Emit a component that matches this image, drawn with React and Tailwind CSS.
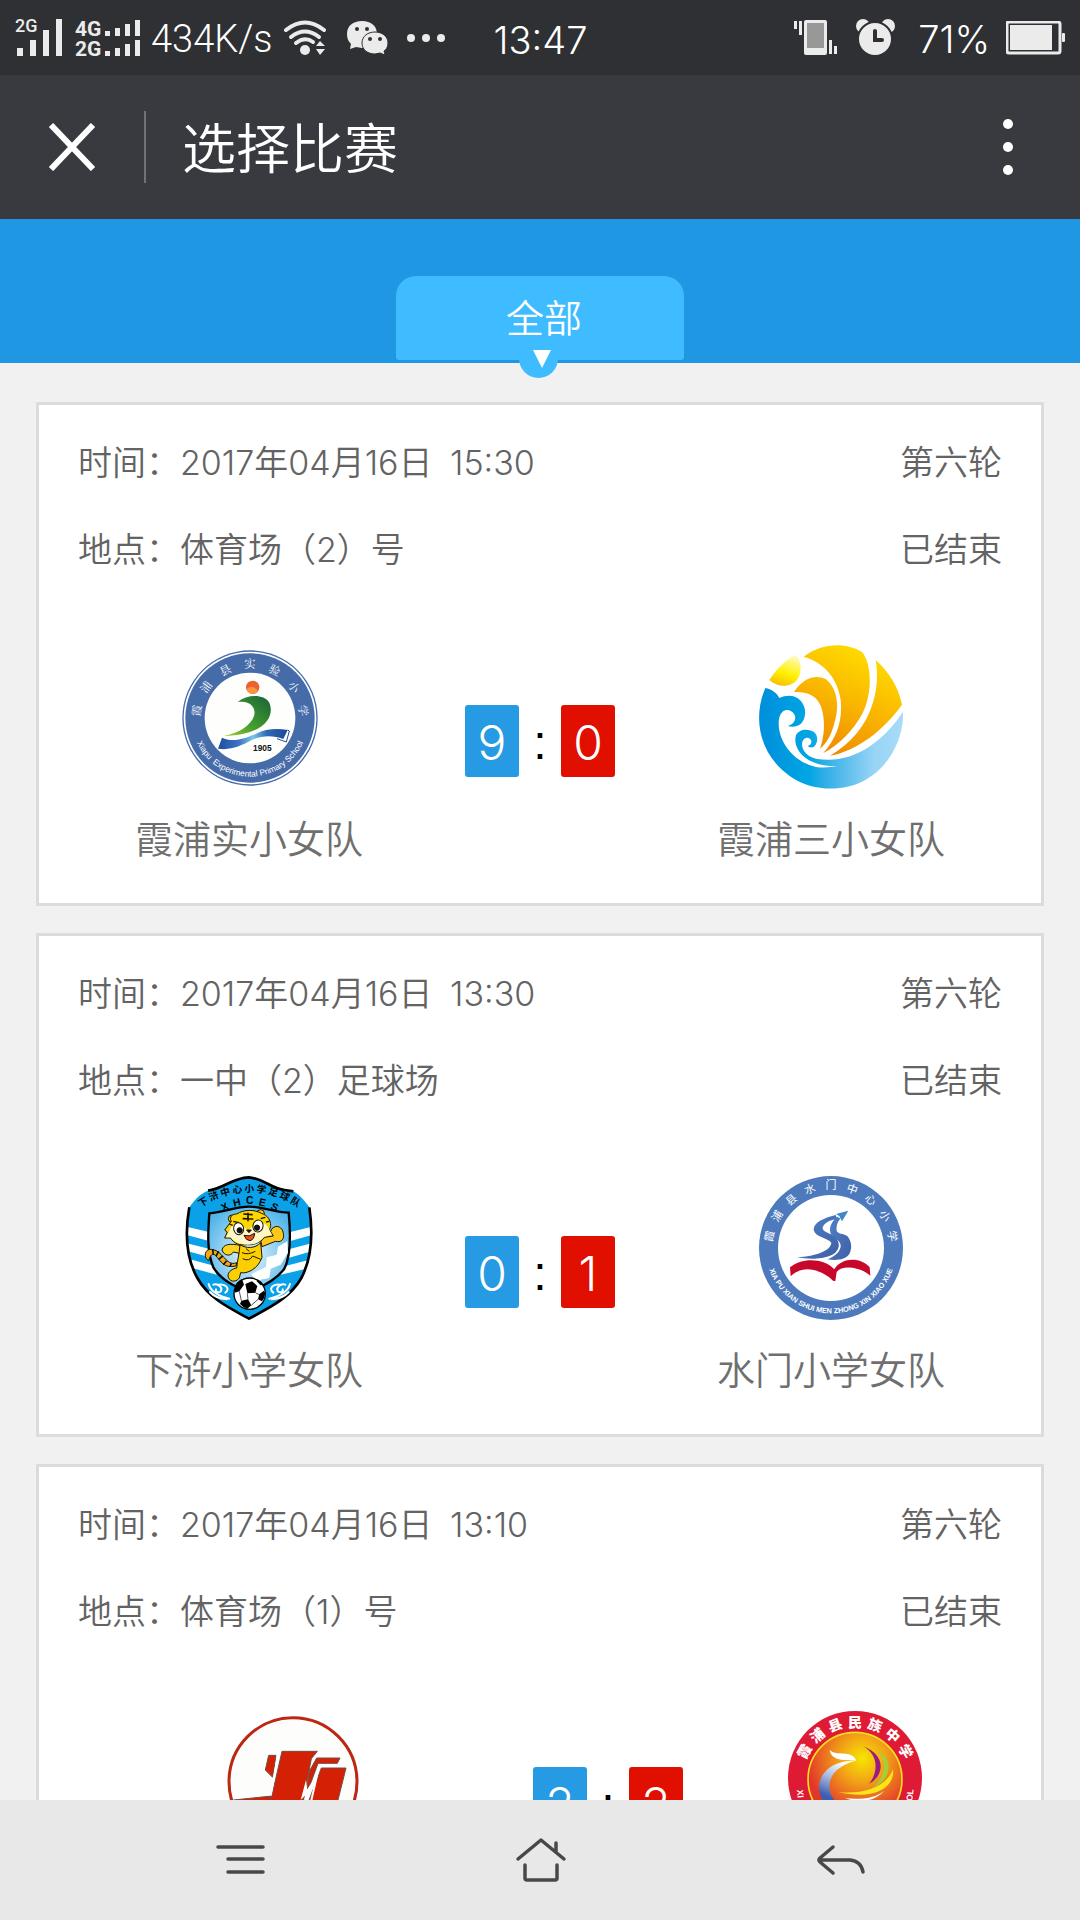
import React from "react";

function RingText({ text, cx, cy, r, from, to, size, weight = 400, fill = "#fff", family }) {
  const chars = [...text];
  const step = (to - from) / (chars.length - 1);
  return (
    <g fill={fill} fontSize={size} fontWeight={weight} textAnchor="middle" fontFamily={family || "'Noto Sans CJK SC', sans-serif"}>
      {chars.map((c, i) => (
        <text key={i} x={cx} y={cy - r + size * 0.36} transform={`rotate(${from + step * i} ${cx} ${cy})`}>
          {c}
        </text>
      ))}
    </g>
  );
}

function XiapuExperimentalLogo() {
  return (
    <svg viewBox="51 75 432 432" className="size-36" role="img" aria-label="霞浦县实验小学">
      <defs>
        <linearGradient id="xe-green" x1="0" y1="1" x2="1" y2="0">
          <stop offset="0" stopColor="#a5cf2c" />
          <stop offset="0.4" stopColor="#45a02f" />
          <stop offset="1" stopColor="#176137" />
        </linearGradient>
        <linearGradient id="xe-book" x1="0" y1="0" x2="1" y2="0">
          <stop offset="0" stopColor="#1c4f9e" />
          <stop offset="0.3" stopColor="#3c74c4" />
          <stop offset="0.5" stopColor="#7ec5ea" />
          <stop offset="0.7" stopColor="#2f6ab6" />
          <stop offset="1" stopColor="#1d4896" />
        </linearGradient>
        <path id="xe-arc" d="M94 294A176 176 0 0 0 446 294" />
      </defs>
      <circle cx="270" cy="294" r="203" fill="#456ba9" />
      <circle cx="270" cy="294" r="199" fill="#fff" />
      <circle cx="270" cy="294" r="194" fill="#456ba9" />
      <circle cx="270" cy="294" r="136" fill="#fefefc" />
      <RingText text="霞浦县实验小学" cx={270} cy={294} r={161} from={-82} to={82} size={34} family="'Noto Serif CJK SC', 'Noto Sans CJK SC', serif" />
      <text fill="#fff" fontSize="25" fontFamily="'Liberation Sans', sans-serif" textAnchor="middle">
        <textPath href="#xe-arc" startOffset="50%">Xiapu&#160; Experimental Primary School</textPath>
      </text>
      <circle cx="278" cy="202" r="20" fill="#ec6231" />
      <path d="M260 208q8-10 18-7 10 4 16 12-8 10-18 9-12-3-16-14z" fill="#f9983e" />
      <path d="M233 246C262 222 312 222 327 247C346 286 318 345 192 348C240 338 272 316 282 288C290 262 268 240 233 246Z" fill="url(#xe-green)" />
      <path d="M186 353C220 370 262 352 288 341C318 326 350 324 383 330L370 357C340 346 306 345 274 361C242 378 212 392 174 386Z" fill="url(#xe-book)" />
      <path d="M383 330l5 3-9 33-28-10" fill="none" stroke="#1d4896" strokeWidth="3" />
      <text x="307" y="392" fontSize="25" fontWeight="700" textAnchor="middle" fill="#111" fontFamily="'Liberation Sans', sans-serif">1905</text>
    </svg>
  );
}

function SunWaveLogo() {
  return (
    <svg viewBox="57 75 432 432" className="size-36" role="img" aria-label="霞浦三小">
      <defs>
        <linearGradient id="sw-gold" gradientUnits="userSpaceOnUse" x1="270" y1="400" x2="400" y2="110">
          <stop offset="0" stopColor="#f08a00" />
          <stop offset="0.5" stopColor="#f9b500" />
          <stop offset="1" stopColor="#ffd900" />
        </linearGradient>
        <linearGradient id="sw-sea" gradientUnits="userSpaceOnUse" x1="57" y1="0" x2="489" y2="0">
          <stop offset="0" stopColor="#008edb" />
          <stop offset="0.35" stopColor="#00a6e4" />
          <stop offset="0.45" stopColor="#2eade6" />
          <stop offset="0.8" stopColor="#98d4f5" />
          <stop offset="1" stopColor="#a6dcf8" />
        </linearGradient>
        <linearGradient id="sw-sun" x1="0.7" y1="0" x2="0.35" y2="1">
          <stop offset="0" stopColor="#fffbc0" />
          <stop offset="0.6" stopColor="#fff100" />
          <stop offset="1" stopColor="#fabe00" />
        </linearGradient>
      </defs>
      <path d="M88 180C108 148 136 120 166 104C182 120 188 148 175 174C156 204 114 204 88 180Z" fill="url(#sw-sun)" />
      <path d="M191 110C246 68 318 66 366 96C396 132 396 216 372 270C350 320 300 374 249 400C292 352 308 300 302 240C294 180 256 128 191 110Z" fill="url(#sw-gold)" />
      <path d="M407 120C448 156 476 204 486 254C430 330 354 392 270 407C334 370 380 316 400 244C412 204 414 160 407 120Z" fill="url(#sw-gold)" />
      <path d="M162 216C186 178 224 160 258 178C294 208 298 262 284 306C274 346 260 370 240 386C254 348 256 300 244 262C232 228 204 214 162 216Z" fill="url(#sw-gold)" />
      <path d="M76 204C94 208 110 218 118 234C140 224 166 224 182 242C202 264 198 296 182 312C170 321 156 322 143 318C158 314 168 302 165 288C160 272 140 264 127 276C110 292 114 336 130 366C150 404 186 432 228 441C250 444 272 442 292 439C262 440 232 434 206 420C176 402 160 372 168 346C176 328 202 324 222 336C236 348 234 370 222 380C214 384 208 382 203 378C214 376 218 364 210 356C200 350 190 356 187 366C182 390 202 410 228 416C330 434 424 374 489 275C492 350 452 440 372 482C308 516 216 514 152 470C64 410 34 302 76 204Z" fill="url(#sw-sea)" />
    </svg>
  );
}

function TigerShieldLogo() {
  return (
    <svg viewBox="51 78 432 432" className="size-36" role="img" aria-label="下浒中心小学足球队">
      <defs>
        <radialGradient id="ts-sky" cx="0.5" cy="0.55" r="0.6">
          <stop offset="0" stopColor="#e6f4fc" />
          <stop offset="1" stopColor="#52b5ea" />
        </radialGradient>
        <clipPath id="ts-clip">
          <path d="M266 82C308 84 334 116 374 120L400 124C420 134 438 158 448 172C458 240 458 320 424 384C390 444 330 472 267 506C204 472 146 444 112 384C76 320 76 240 88 172C100 154 120 130 144 122C190 116 216 84 266 82Z" />
        </clipPath>
      </defs>
      <g clipPath="url(#ts-clip)">
        <rect x="60" y="78" width="410" height="432" fill="#0aa1e8" />
        <path d="M80 230l70 17v27L80 255zM80 280l70 17v25L84 304zM90 328l66 18 14 28L96 354zM455 230l-64 16v27l66-18zM455 280l-66 17-4 27 70-20zM446 330l-70 18-14 26 78-18z" fill="#fff" />
      </g>
      <path d="M144 122C190 116 216 84 266 82C308 84 334 116 374 120L400 124M448 172C458 240 458 320 424 384C390 444 330 472 267 506C204 472 146 444 112 384C76 320 76 240 88 172" fill="none" stroke="#000" strokeWidth="8" />
      <path d="M148 190C194 186 228 170 268 170C308 170 342 186 386 188C392 250 394 318 372 358C344 394 304 408 267 428C226 410 184 392 160 352C140 306 144 246 148 190Z" fill="url(#ts-sky)" stroke="#000" strokeWidth="7" />
      <path d="M382 274l-28 16-4 24-30 8-2 28-44 22 12 20 42-8 4-28 30-12 22-36z" fill="#fff" />
      <RingText text="下浒中心小学足球队" cx={268} cy={378} r={262} from={-32} to={32} size={29} weight={700} fill="#000" />
      <RingText text="XHCES" cx={269} cy={317} r={165} from={-27} to={27} size={31} weight={700} fill="#000" family="'Liberation Sans', sans-serif" />
      <g stroke="#1a1200" strokeWidth="3" strokeLinejoin="round">
        <path d="M230 338C196 352 190 296 148 298C130 304 134 326 146 332C150 316 158 308 166 316C184 334 190 356 228 348Z" fill="#f4a91c" />
        <path d="M158 298l2 16M176 304l-8 14M188 318l-12 10M200 332l-10 12M214 340l-4 10" fill="none" strokeWidth="5" />
        <path d="M240 286C210 280 190 282 186 300C192 318 212 320 220 306L248 312Z" fill="#fcd21c" />
        <path d="M300 262C318 256 330 252 336 236C350 222 368 232 370 250C374 270 362 278 346 274L306 290Z" fill="#fcc81c" />
        <path d="M240 284C258 296 286 296 302 278L306 322C294 358 260 372 242 368L238 384C226 400 206 394 204 378C204 364 218 356 230 354C232 332 238 312 240 284Z" fill="#fcd000" />
        <circle cx="216" cy="206" r="11" fill="#fcc81c" />
        <circle cx="302" cy="190" r="11" fill="#fcc81c" />
        <path d="M214 214C206 200 218 192 230 192C252 178 284 178 304 190C324 196 332 212 332 226C332 232 330 236 328 238L340 258L314 262C300 280 276 286 262 284C240 288 220 280 212 264L194 264L202 246L194 240Z" fill="#fcd800" />
        <path d="M214 230C230 214 250 226 264 242C280 222 304 210 322 228L336 254L312 260C294 282 280 284 264 284C240 284 222 276 212 262L198 262L206 246Z" fill="#fff7c8" stroke="none" />
        <path d="M250 192l28 2M248 206l32 1M264 188v26" fill="none" strokeWidth="5" />
        <path d="M220 214l16 4M302 206l14-4M318 216l10-2M208 222l10 4" strokeWidth="4" />
        <ellipse cx="236" cy="236" rx="15" ry="18" fill="#fff" transform="rotate(-12 236 236)" />
        <ellipse cx="294" cy="228" rx="15" ry="18" fill="#fff" transform="rotate(12 294 228)" />
        <circle cx="239" cy="241" r="8" fill="#111" />
        <circle cx="291" cy="233" r="8" fill="#111" />
        <path d="M260 240h14l-7 8z" fill="#111" />
        <path d="M252 256q16 6 32-6-2 20-14 22-12 0-18-16z" fill="#e84b26" />
        <path d="M246 308q18 8 40-4M248 326q20 10 30-8l24 10M258 296l10 8" fill="none" />
      </g>
      <g fill="none" stroke="#fff" strokeWidth="6" strokeLinecap="round">
        <path d="M146 402c6 24 30 36 62 44M160 404c10-4 26 4 24 16s-20 6-16-2M176 404c20-4 36 12 20 24M150 426c12 14 30 20 50 22" />
        <path d="M390 402c-6 24-30 36-62 44M376 404c-10-4-26 4-24 16s20 6 16-2M360 404c-20-4-36 12-20 24M386 426c-12 14-30 20-50 22" />
      </g>
      <circle cx="269" cy="431" r="47" fill="#fff" stroke="#000" strokeWidth="4" />
      <path d="M256 402l20-8 16 14-6 20-24 2zM226 406q8-14 20-18l6 16-14 20-14 4zM244 452l20-4 10 18-12 10q-14-4-22-14zM298 432l14-10 4 8q-2 14-10 24l-12-6zM292 388q12 6 18 16l-8 2-12-12z" fill="#000" />
      <path d="M238 424l6 28M262 430l2 18M286 428l12 6M274 466l20-18" stroke="#000" strokeWidth="2" />
    </svg>
  );
}

function ShuimenLogo() {
  return (
    <svg viewBox="57 78 432 432" className="size-36" role="img" aria-label="霞浦县水门中心小学">
      <defs>
        <path id="sm-arc" d="M77 294A196 196 0 0 0 469 294" />
        <linearGradient id="sm-s" x1="0" y1="0" x2="1" y2="1">
          <stop offset="0" stopColor="#4f82c6" />
          <stop offset="1" stopColor="#3f5fa8" />
        </linearGradient>
      </defs>
      <circle cx="273" cy="294" r="216" fill="#4c7abc" />
      <circle cx="273" cy="294" r="159" fill="#fff" />
      <RingText text="霞浦县水门中心小学" cx={273} cy={294} r={188} from={-79} to={79} size={33} />
      <text fill="#fff" fontSize="22" fontWeight="700" fontFamily="'Liberation Sans', sans-serif" textAnchor="middle">
        <textPath href="#sm-arc" startOffset="50%">XIA PU XIAN SHUI MEN ZHONG XIN XIAO XUE</textPath>
      </text>
      <path d="M287 195C250 204 220 218 221 240C226 262 264 264 274 278C272 302 230 318 171 322C216 330 262 326 286 308C300 294 300 278 286 262C272 248 246 248 248 232C254 216 276 208 292 208Z" fill="url(#sm-s)" />
      <path d="M292 200C274 214 264 236 274 254C286 268 304 272 302 290C298 310 280 320 262 328C290 332 316 330 328 312C338 292 334 274 322 258C310 250 292 252 290 242C288 226 294 212 302 206Z" fill="url(#sm-s)" />
      <path d="M325 182L288 192L298 198L306 214Z" fill="#3f86c6" />
      <path d="M150 352C186 322 252 324 283 358C304 322 362 320 389 352L391 377C360 350 306 344 290 366L286 393H280C250 362 190 340 152 379Z" fill="#c7082a" />
    </svg>
  );
}

function RedMonogramLogo() {
  return (
    <svg viewBox="33 21 432 432" className="size-36" role="img" aria-label="队徽">
      <circle cx="249" cy="245" r="192" fill="#fdfdfb" stroke="#a8321f" strokeWidth="9" />
      <circle cx="249" cy="245" r="191" fill="none" stroke="#d02008" strokeWidth="4" />
      <g stroke="#6d5046" strokeWidth="3" strokeLinejoin="round" fill="#d42005">
        <path d="M176 166h22l-10 66-22-22z" />
        <path d="M216 154h106l-18 22-34 180H170L186 286z" />
        <path d="M320 174h70l-8 16h-58l-22 60-12 18 8-54z" />
        <path d="M334 204h74l-38 152H276z" />
        <path d="M70 300l116-12-8 24-100 6z" />
      </g>
      <path d="M206 154l-24 132M326 204l-34 150" stroke="#fff" strokeWidth="6" />
      <path d="M288 240l-16 60 14-14 4 18 14-46-12 12z" fill="#fff" />
    </svg>
  );
}

function PhoenixLogo() {
  return (
    <svg viewBox="24 21 432 432" className="size-36" role="img" aria-label="霞浦县民族中学">
      <defs>
        <radialGradient id="ph-bg" cx="0.58" cy="0.28" r="0.6">
          <stop offset="0" stopColor="#f6e600" />
          <stop offset="0.4" stopColor="#f2a516" />
          <stop offset="1" stopColor="#e2362b" />
        </radialGradient>
        <linearGradient id="ph-body" x1="0.6" y1="0" x2="0.3" y2="1">
          <stop offset="0" stopColor="#fff" />
          <stop offset="0.35" stopColor="#a9bbe0" />
          <stop offset="0.7" stopColor="#3f5db0" />
        </linearGradient>
      </defs>
      <circle cx="240" cy="234" r="201" fill="#df1a34" />
      <circle cx="240" cy="238" r="141" fill="url(#ph-bg)" stroke="#f6e01c" strokeWidth="5" />
      <RingText text="霞浦县民族中学" cx={240} cy={238} r={173} from={-61} to={61} size={42} weight={900} />
      <path d="M240 182C190 180 140 204 132 254C130 300 160 352 240 346C190 322 158 290 164 250C170 212 200 196 240 182Z" fill="url(#ph-body)" />
      <path d="M164 150C184 170 232 148 244 182C224 180 206 182 192 178C176 174 166 164 164 150Z" fill="#fff" />
      <path d="M264 139C326 160 336 220 282 252C310 218 312 164 264 139Z" fill="#9b1a80" />
      <path d="M307 152C358 176 350 240 292 264C334 230 338 182 307 152Z" fill="#a2d036" />
      <path d="M354 208C360 262 300 302 188 276C262 284 334 262 354 208Z" fill="#f8e61a" />
      <path d="M328 272C300 296 250 300 210 294C250 312 300 304 328 272Z" fill="#fff" />
      <g fill="#fff" fontSize="26" fontWeight="700" fontFamily="'Liberation Sans', sans-serif">
        <text x="66" y="270" transform="rotate(84 66 270)">XI</text>
        <text x="412" y="304" transform="rotate(-84 412 304)">OL</text>
      </g>
    </svg>
  );
}

function SignalSingle() {
  return (
    <svg width="48" height="50" viewBox="15 13 48 50" fill="#ebebeb" aria-hidden="true">
      <text x="15" y="32" fontSize="18" fontWeight="500" fontFamily="Roboto, sans-serif">2G</text>
      <path d="M17 48h6v8h-6zM30 40h6v16h-6zM43 30h6v26h-6zM56 19h6v37h-6z" />
    </svg>
  );
}

function SignalDual() {
  return (
    <svg width="66" height="50" viewBox="75 13 66 50" fill="#ebebeb" aria-hidden="true">
      <g fontSize="21" fontWeight="700" fontFamily="Roboto, sans-serif">
        <text x="75" y="36">4G</text>
        <text x="75" y="56">2G</text>
      </g>
      <path d="M105 31h5v5h-5zM115 28h5v8h-5zM125 24h5v12h-5zM135 20h5v16h-5zM105 51h5v5h-5zM115 48h5v8h-5zM125 44h5v12h-5zM135 40h5v16h-5z" />
    </svg>
  );
}

function WifiIcon() {
  return (
    <svg width="44" height="36" viewBox="283 19 44 36" fill="#ebebeb" aria-hidden="true">
      <g fill="none" stroke="#ebebeb" strokeWidth="4" strokeLinecap="round">
        <path d="M286 29q19-15 38 0" />
        <path d="M291 36q14-11 28 0" />
        <path d="M296 42q9-7 17-1" />
      </g>
      <circle cx="305" cy="49" r="5" />
      <path d="M316 45l4-5 5 5zM316 48h9l-5 6z" />
    </svg>
  );
}

function WechatIcon() {
  return (
    <svg width="42" height="36" viewBox="346 19 42 36" aria-hidden="true">
      <path d="M361 20c9 0 15 5 15 13s-6 14-15 14l-6-1-6 2 1-5c-3-3-4-6-4-10 0-8 6-13 15-13z" fill="#ebebeb" />
      <circle cx="356" cy="28" r="2" fill="#2f3033" />
      <circle cx="366" cy="28" r="2" fill="#2f3033" />
      <path d="M374 31c8 0 13 5 13 11 0 4-2 7-4 8l1 4-5-2-5 1c-7 0-13-4-13-11s6-11 13-11z" fill="#ebebeb" stroke="#2f3033" strokeWidth="1" />
      <circle cx="369" cy="38" r="2" fill="#2f3033" />
      <circle cx="379" cy="38" r="2" fill="#2f3033" />
    </svg>
  );
}

function VibrateIcon() {
  return (
    <svg width="44" height="36" viewBox="794 19 44 36" fill="#ebebeb" aria-hidden="true">
      <rect x="804" y="19" width="23" height="35" rx="2" />
      <rect x="807" y="22" width="17" height="25" fill="#989898" />
      <path d="M794 20h3v8h-3zM799 20h3v14h-3zM829 39h3v14h-3zM834 45h3v8h-3z" />
    </svg>
  );
}

function AlarmIcon() {
  return (
    <svg width="40" height="37" viewBox="856 19 40 37" aria-hidden="true">
      <circle cx="863" cy="26" r="7" fill="#ebebeb" />
      <circle cx="888" cy="26" r="7" fill="#ebebeb" />
      <circle cx="875" cy="39" r="17" fill="#ebebeb" stroke="#2f3033" strokeWidth="2" />
      <path d="M875 31v9h7" fill="none" stroke="#2f3033" strokeWidth="4" strokeLinecap="round" />
    </svg>
  );
}

function BatteryIcon() {
  return (
    <svg width="60" height="34" viewBox="1006 21 60 34" fill="#ebebeb" aria-hidden="true">
      <rect x="1007" y="22" width="53" height="31" rx="2" fill="none" stroke="#ebebeb" strokeWidth="3" />
      <rect x="1010" y="25" width="42" height="25" />
      <rect x="1062" y="33" width="3" height="9" rx="1" />
    </svg>
  );
}

function StatusBar() {
  return (
    <div className="flex h-[75px] shrink-0 items-center bg-[#2f3033] pr-[14px] pl-[15px] text-[38px] leading-[44px] text-white">
      <div className="flex flex-1 items-center">
        <SignalSingle />
        <span className="ml-3"><SignalDual /></span>
        <span className="ml-[10px] pt-[2px] font-[Roboto] font-[350]">434K/s</span>
        <span className="ml-[10px]"><WifiIcon /></span>
        <span className="ml-5"><WechatIcon /></span>
        <span className="ml-[18px] flex gap-[7px]">
          <i className="size-2 rounded-full bg-[#ebebeb]" />
          <i className="size-2 rounded-full bg-[#ebebeb]" />
          <i className="size-2 rounded-full bg-[#ebebeb]" />
        </span>
      </div>
      <time className="pt-1 font-[Inter] font-light">13:47</time>
      <div className="flex flex-1 items-center justify-end">
        <VibrateIcon />
        <span className="ml-[18px]"><AlarmIcon /></span>
        <span className="ml-[22px] pt-[2px] font-[Inter] font-light">71%</span>
        <span className="ml-4"><BatteryIcon /></span>
      </div>
    </div>
  );
}

function Header() {
  return (
    <header className="flex h-36 shrink-0 items-center bg-[#393a3f] text-white">
      <button type="button" aria-label="关闭" className="flex h-[72px] w-[146px] items-center border-r-2 border-[#707175] pl-12">
        <svg width="48" height="48" viewBox="0 0 48 48" stroke="#fff" strokeWidth="6" aria-hidden="true">
          <path d="M3 2L45 46M45 2L3 46" />
        </svg>
      </button>
      <h1 className="flex-1 pb-[2px] pl-9 text-[54px] leading-[72px] font-[350]">选择比赛</h1>
      <button type="button" aria-label="更多" className="flex h-full w-[145px] flex-col items-center justify-center gap-[13px]">
        <i className="size-[10px] rounded-full bg-white" />
        <i className="size-[10px] rounded-full bg-white" />
        <i className="size-[10px] rounded-full bg-white" />
      </button>
    </header>
  );
}

function FilterBar() {
  return (
    <div className="flex h-36 shrink-0 items-end justify-center bg-[#2097e2] pb-[3px]">
      <button type="button" className="relative z-10 h-[84px] w-[288px] rounded-t-[20px] rounded-b-[3px] bg-[#3ebcff] pb-1 pl-2 text-[38px] leading-[80px] font-[350] text-white">
        全部
        <span className="absolute -bottom-[18px] left-[123px] flex h-[39px] w-[39px] items-center justify-center rounded-full bg-[#3ebcff]">
          <svg width="18" height="18" viewBox="0 0 18 18" className="ml-[6px]" aria-hidden="true">
            <path d="M0 0h18L9 18z" fill="#fff" />
          </svg>
        </span>
      </button>
    </div>
  );
}

function Team({ Logo, name }) {
  return (
    <div className="flex flex-col items-center gap-5">
      <Logo />
      <p className="h-[60px] text-[38px] leading-[56px] font-[350] whitespace-nowrap text-[#6f6f6f]">{name}</p>
    </div>
  );
}

function Score({ home, away }) {
  return (
    <div className="flex h-[72px] justify-center text-5xl leading-[76px] text-white">
      <span className="h-[72px] w-[54px] shrink-0 rounded-[3px] bg-[#279ae4] text-center font-[Inter] font-light">{home}</span>
      <span className="w-[42px] shrink-0 text-center font-['Liberation_Sans'] text-black">:</span>
      <span className="h-[72px] w-[54px] shrink-0 rounded-[3px] bg-[#e00f00] text-center font-[Inter] font-light">{away}</span>
    </div>
  );
}

const evenColumns = "grid grid-cols-[minmax(0,420fr)_minmax(0,162fr)_minmax(0,420fr)]";
const wideHomeColumns = "grid grid-cols-[minmax(0,508fr)_minmax(0,122fr)_minmax(0,372fr)]";

const matches = [
  { date: "2017年04月16日", time: "15:30", place: "体育场（2）号", columns: evenColumns, home: ["霞浦实小女队", XiapuExperimentalLogo, 9], away: ["霞浦三小女队", SunWaveLogo, 0] },
  { date: "2017年04月16日", time: "13:30", place: "一中（2）足球场", columns: evenColumns, home: ["下浒小学女队", TigerShieldLogo, 0], away: ["水门小学女队", ShuimenLogo, 1] },
  { date: "2017年04月16日", time: "13:10", place: "体育场（1）号", columns: wideHomeColumns, home: ["", RedMonogramLogo, 2], away: ["", PhoenixLogo, 2] },
];

function MatchCard({ match }) {
  return (
    <article className="border-[3px] border-[#dcdcdc] bg-white pt-[14px] pb-[34px]">
      <div className="px-[39px] font-[Inter,'Noto_Sans_CJK_SC',sans-serif] text-[34px] leading-[87px] font-[350] text-[#636363]">
        <div className="flex justify-between">
          <span>时间：{match.date} <span className="ml-2">{match.time}</span></span>
          <span>第六轮</span>
        </div>
        <div className="flex justify-between"><span>地点：{match.place}</span><span>已结束</span></div>
      </div>
      <div className={match.columns + " mt-[52px]"}>
        <Team name={match.home[0]} Logo={match.home[1]} />
        <div className="pt-15"><Score home={match.home[2]} away={match.away[2]} /></div>
        <Team name={match.away[0]} Logo={match.away[1]} />
      </div>
    </article>
  );
}

function NavBar() {
  const icon = "h-[60px] w-[60px] fill-none stroke-[#484848] stroke-[3.5px]";
  return (
    <nav className="grid h-[120px] shrink-0 grid-cols-3 bg-[#e8e8e8] px-[90px]">
      <button type="button" aria-label="菜单" className="flex items-center justify-center">
        <svg viewBox="210 1830 60 60" className={icon} strokeLinecap="round"><path d="M218 1847h45M228 1859h35M228 1872h35" /></svg>
      </button>
      <button type="button" aria-label="主页" className="flex items-center justify-center">
        <svg viewBox="510 1830 60 60" className={icon} strokeLinecap="round" strokeLinejoin="round"><path d="M518 1859L541 1840L564 1859M556 1843v9M525 1865v13q0 2 2 2h28q2 0 2-2v-13" /></svg>
      </button>
      <button type="button" aria-label="返回" className="flex items-center justify-center">
        <svg viewBox="810 1830 60 60" className={icon} strokeLinecap="round" strokeLinejoin="round"><path d="M833 1847L820 1858q-2 2 0 4L833 1873M819 1860h31q11 1 13 12" /></svg>
      </button>
    </nav>
  );
}

export default function App() {
  return (
    <div className="flex h-screen flex-col bg-[#f1f1f1] font-['Noto_Sans_CJK_SC',sans-serif]">
      <StatusBar />
      <Header />
      <FilterBar />
      <main className="flex min-h-0 flex-1 flex-col gap-[27px] overflow-y-auto px-9 pt-[39px] [scrollbar-width:none] *:shrink-0">
        {matches.map((m) => (
          <MatchCard key={m.time} match={m} />
        ))}
      </main>
      <NavBar />
    </div>
  );
}
